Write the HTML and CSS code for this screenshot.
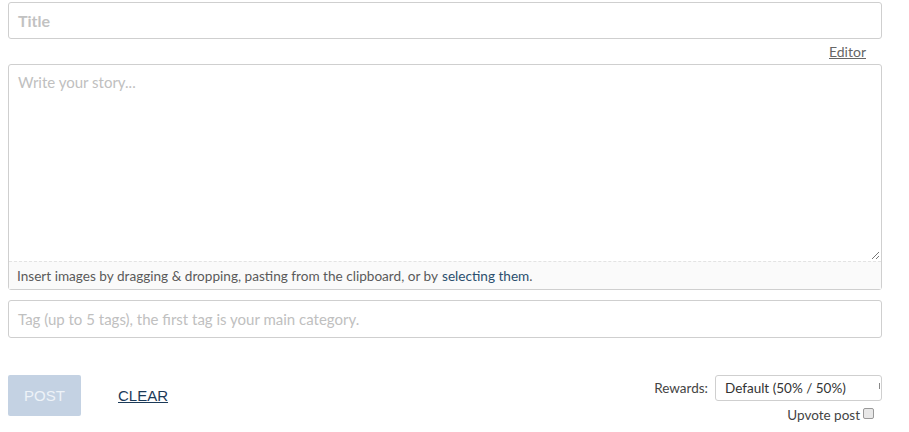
FILE: index.html
```html
<!DOCTYPE html>
<html>
<head>
<meta charset="utf-8">
<link rel="stylesheet" href="styles.css">
</head>
<body>
<div class="page">
  <div class="field title-field"><span class="ph-title">Title</span></div>
  <div class="editor-row"><a class="editor-link" href="#">Editor</a></div>
  <div class="story">
    <div class="story-body">
      <span class="ph story-ph">Write your story...</span>
      <svg class="grip" width="9" height="9" viewBox="0 0 9 9"><path d="M8 1 L1 8 M8 5 L5 8" stroke="#777" stroke-width="1"/></svg>
    </div>
    <div class="story-foot">Insert images by dragging &amp; dropping, pasting from the clipboard, or by <a href="#" class="sel">selecting them</a>.</div>
  </div>
  <div class="field tag-field"><span class="ph tag-ph">Tag (up to 5 tags), the first tag is your main category.</span></div>
  <div class="actions">
    <div class="left">
      <button class="post">POST</button>
      <a href="#" class="clear">CLEAR</a>
    </div>
    <div class="right">
      <div class="rewards">
        <span class="rw-label">Rewards:</span>
        <div class="select">Default (50% / 50%)<span class="caret"></span></div>
      </div>
      <label class="upvote">Upvote post<span class="cb"></span></label>
    </div>
  </div>
</div>
</body>
</html>
```

FILE: styles.css
```css
* { box-sizing: border-box; }
html, body { margin: 0; padding: 0; background: #fff; }
body { font-family: "Lato", "Open Sans", sans-serif; }
.page { width: 874px; margin: 2px 0 0 8px; }
.field {
  border: 1px solid #cfcfcf;
  border-radius: 3px;
  height: 37px;
  display: flex;
  align-items: center;
  padding: 0 9px;
  background: #fff;
}
.ph-title { font-weight: bold; font-size: 16px; color: #c2c2c2; }
.ph { color: #c0c0c0; }
.story-ph { font-size: 15px; }
.tag-ph { font-size: 15px; }
.editor-row { display: flex; justify-content: flex-end; padding-right: 16px; height: 25px; align-items: center; }
.editor-link { font-size: 14px; color: #666; text-decoration: underline; }
.story {
  border: 1px solid #cfcfcf;
  border-radius: 3px;
  height: 226px;
  display: flex;
  flex-direction: column;
}
.story-body { flex: 1; padding: 7px 9px; position: relative; }
.grip { position: absolute; right: 1px; bottom: 1px; }
.story-foot {
  height: 28px;
  border-top: 1px dashed #e3e3e3;
  background: #fafafa;
  font-size: 13.6px;
  color: #5a5a5a;
  padding: 1px 8px 0;
  display: flex;
  align-items: center;
}
.story-foot .sel { color: #2b4f6e; text-decoration: none; margin-left: 4px; }
.tag-field { margin-top: 10px; height: 38px; }
.actions { display: flex; justify-content: space-between; align-items: flex-start; margin-top: 37px; }
.left { display: flex; align-items: center; }
.post {
  width: 73px; height: 41px;
  background: #c4d2e3; border: none; border-radius: 2px;
  color: #eef3f8; font-family: "Liberation Sans", Arial, sans-serif; font-size: 15px;
  padding: 0;
}
.clear {
  margin-left: 37px; font-family: "Liberation Sans", Arial, sans-serif; font-size: 15px;
  color: #1c3a58; text-decoration: underline;
}
.right { display: flex; flex-direction: column; align-items: flex-end; }
.rewards { display: flex; align-items: center; }
.rw-label { font-size: 13.5px; color: #444; margin-right: 7px; }
.select {
  width: 167px; height: 26px; border: 1px solid #cfcfcf; border-radius: 3px;
  font-size: 13.5px; color: #333; padding: 0 9px; display: flex; align-items: center; position: relative;
}
.caret { position: absolute; right: 1px; top: 7px; width: 1px; height: 6px; background: #888; }
.upvote { display: flex; align-items: center; font-size: 13.5px; color: #444; margin-top: 6px; margin-right: 8px; }
.cb { width: 11px; height: 11px; border: 1px solid #999; border-radius: 2px; background: #e8e8e8; margin-left: 3px; margin-top: -4px; }
```
